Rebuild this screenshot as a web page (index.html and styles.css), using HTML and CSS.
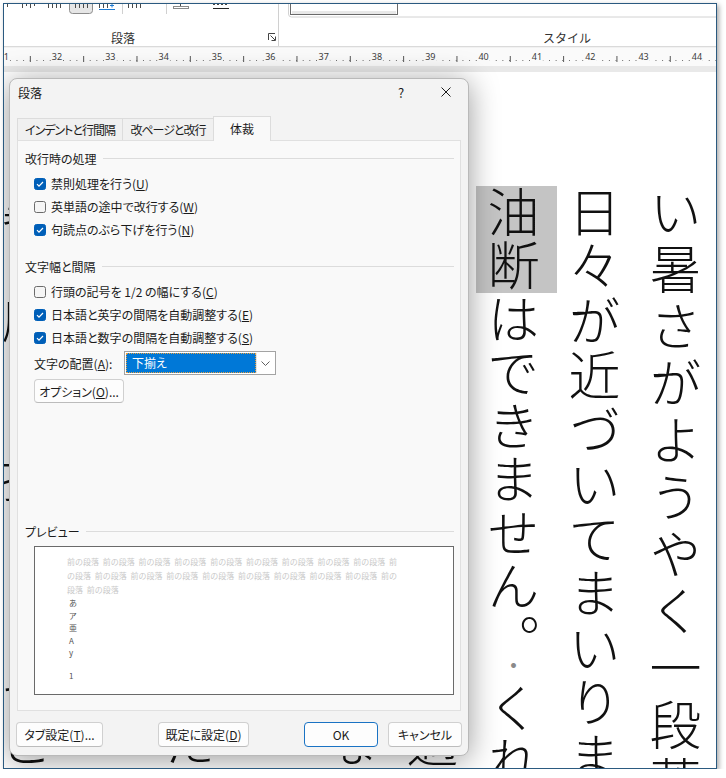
FILE: index.html
```html
<!DOCTYPE html>
<html lang="ja">
  <head>
    <meta charset="utf-8" />
    <title>段落</title>
    <link rel="stylesheet" href="styles.css">
  </head>
  <body>
    <div class="window">
      <header class="ribbon">
        <svg class="ribbon-icons" width="712" height="20" viewBox="4 4 712 20">
          <g stroke="#4a4a4a" fill="none">
            <path d="M7.5 4v3M22.5 4v4M26.5 4v2M30.5 4v4M34.5 4v2M48.5 4v4M52.5 4v4M56.5 4v4M60.5 4v4"/>
            <rect x="69.5" y="0.5" width="23" height="13" rx="3" fill="#e6e6e6" stroke="#8c8c8c"/>
            <path d="M75.5 4v4M79.5 4v4M83.5 4v4M87.5 4v4M99.5 4v4M103.5 4v4M107.5 4v4"/>
            <path d="M128.5 4v4M132.5 4v4M136.5 4v4M140.5 4v4M180.5 4v2"/>
          </g>
          <path d="M99 9.5h16M110 5.5h4M112 3.5v4" stroke="#1e7bd3"/>
          <path d="M122.5 4v10M166.5 4v10M278.5 4v20" stroke="#d0d0d0"/>
          <rect x="173.5" y="6.5" width="15" height="2" fill="none" stroke="#8a8a8a"/>
          <path d="M213 4.5h16" stroke="#444" stroke-dasharray="2 2"/>
          <path d="M213 8.5h16" stroke="#222"/>
          <path d="M288.5 4v10a3 3 0 0 0 3 3H716" fill="none" stroke="#d2d2d2"/>
          <rect x="290.5" y="2.5" width="107" height="12" fill="#fff" stroke="#6a6a6a"/>
          <rect x="292" y="11" width="104" height="3" fill="#e8e8e8"/>
        </svg>
        <div class="ribbon-labels">
          <div class="group group-para">
            <span class="label">段落</span>
            <svg class="launcher" width="8" height="8" viewBox="0 0 8 8"><path d="M0.5 7V0.5H7M2.5 2.5l4.5 4.5M7.5 3.5v4h-4" fill="none" stroke="#444"/></svg>
          </div>
          <div class="group group-style">
            <span class="label">スタイル</span>
          </div>
        </div>
      </header>

      <div class="ruler-bar">
        <div class="ruler">
          <div class="ruler-num"><span>31</span></div>
          <div class="ruler-num"><span>32</span></div>
          <div class="ruler-num"><span>33</span></div>
          <div class="ruler-num"><span>34</span></div>
          <div class="ruler-num"><span>35</span></div>
          <div class="ruler-num"><span>36</span></div>
          <div class="ruler-num"><span>37</span></div>
          <div class="ruler-num"><span>38</span></div>
          <div class="ruler-num"><span>39</span></div>
          <div class="ruler-num"><span>40</span></div>
          <div class="ruler-num"><span>41</span></div>
          <div class="ruler-num"><span>42</span></div>
          <div class="ruler-num"><span>43</span></div>
          <div class="ruler-num"><span>44</span></div>
          <div class="ruler-num"><span>45</span></div>
        </div>
        <div class="ruler-band"></div>
      </div>

      <main class="doc">
        <div class="page">
          <p class="c1">い暑さがようやく一段落し、</p>
          <p class="c2">日々が近づいてまいりました。</p>
          <p class="c3"><span class="sel">油断</span>はできません。<span class="sp">・</span>くれぐれも</p>
          <p>お体にお気をつけてお過ごしください。</p>
          <p>さて、このたびは結構なお品を</p>
          <p>お送りいただきまして、誠に</p>
          <p>ありがとうございました。家族</p>
          <p>まずは御礼まで。</p>
          <p>暑さ厳しき折、どうぞご自愛ください。</p>
        </div>
      </main>

      <div class="dialog">
        <div class="dlg-title">
          <span>段落</span>
          <span class="dlg-help">?</span>
          <span class="dlg-close">
            <svg width="10" height="10" viewBox="0 0 10 10"><path d="M0.5 0.5l9 9M9.5 0.5l-9 9" stroke="#1b1b1b"/></svg>
          </span>
        </div>

        <div class="tabs">
          <div class="tab tab-indent">インデントと行間隔</div>
          <div class="tab tab-page">改ページと改行</div>
          <div class="tab tab-style active">体裁</div>
        </div>

        <div class="panel">
          <div class="group-head">改行時の処理</div>
          <label class="check on first">
            <span class="box"><svg width="10" height="10" viewBox="0 0 10 10"><path d="M2 5.2l2 2 4-4.2" fill="none" stroke="#fff" stroke-width="1.2"/></svg></span>
            禁則処理を行う(<u>U</u>)
          </label>
          <label class="check">
            <span class="box"></span>
            英単語の途中で改行する(<u>W</u>)
          </label>
          <label class="check on">
            <span class="box"><svg width="10" height="10" viewBox="0 0 10 10"><path d="M2 5.2l2 2 4-4.2" fill="none" stroke="#fff" stroke-width="1.2"/></svg></span>
            句読点のぶら下げを行う(<u>N</u>)
          </label>

          <div class="group-head second">文字幅と間隔</div>
          <label class="check first">
            <span class="box"></span>
            行頭の記号を 1/2 の幅にする(<u>C</u>)
          </label>
          <label class="check on">
            <span class="box"><svg width="10" height="10" viewBox="0 0 10 10"><path d="M2 5.2l2 2 4-4.2" fill="none" stroke="#fff" stroke-width="1.2"/></svg></span>
            日本語と英字の間隔を自動調整する(<u>E</u>)
          </label>
          <label class="check on">
            <span class="box"><svg width="10" height="10" viewBox="0 0 10 10"><path d="M2 5.2l2 2 4-4.2" fill="none" stroke="#fff" stroke-width="1.2"/></svg></span>
            日本語と数字の間隔を自動調整する(<u>S</u>)
          </label>

          <div class="select-row">
            <span class="select-label">文字の配置(<u>A</u>):</span>
            <div class="select">
              <span class="select-value">下揃え</span>
              <span class="select-arrow">
                <svg width="9" height="5" viewBox="0 0 9 5"><path d="M0.5 0.5l4 4 4-4" fill="none" stroke="#606060"/></svg>
              </span>
            </div>
          </div>
          <div class="btn opt-btn">オプション(<u>O</u>)...</div>

          <div class="preview">
            <div class="group-head">プレビュー</div>
            <div class="preview-box">
              <p class="prev-text">前の段落 前の段落 前の段落 前の段落 前の段落 前の段落 前の段落 前の段落 前の段落 前の段落 前の段落 前の段落 前の段落 前の段落 前の段落 前の段落 前の段落 前の段落 前の段落 前の段落</p>
              <div class="prev-chars">
                <span>あ</span>
                <span>ア</span>
                <span>亜</span>
                <span>A</span>
                <span>y</span>
                <span class="one">1</span>
              </div>
            </div>
          </div>
        </div>

        <div class="dlg-buttons">
          <div class="btn btn-tab">タブ設定(<u>T</u>)...</div>
          <div class="btn btn-default">既定に設定(<u>D</u>)</div>
          <div class="btn btn-ok">OK</div>
          <div class="btn btn-cancel">キャンセル</div>
        </div>
      </div>
    </div>
  </body>
</html>
```

FILE: styles.css
```css
/* Reset */
* {
  margin: 0;
  padding: 0;
  box-sizing: border-box;
}

body {
  background: #fff;
  font-family: "Noto Sans CJK JP", "Noto Sans", sans-serif;
  font-size: 12px;
  color: #1b1b1b;
  overflow: hidden;
}

/* Word window */
.window {
  position: relative;
  width: 714px;
  height: 766px;
  margin: 3px 0 0 3px;
  border: 1px solid #2b5a80;
  box-shadow: 2px 2px 5px rgba(0, 0, 0, 0.35);
  display: flex;
  flex-direction: column;
  overflow: hidden;
  background: #fff;
}

/* Ribbon */
.ribbon {
  flex: none;
  height: 42px;
  background: #fff;
}

.ribbon-icons {
  display: block;
}

.ribbon-labels {
  display: flex;
  height: 22px;
}

.group {
  display: flex;
  align-items: center;
  padding-top: 4px;
  color: #333;
}

.group-para {
  width: 275px;
  border-right: 1px solid #d0d0d0;
}

.group-para .label {
  margin-left: 107px;
}

.launcher {
  margin-left: auto;
  margin-right: 2px;
}

.group-style .label {
  margin-left: 264px;
}

/* Ruler */
.ruler-bar {
  flex: none;
  border-top: 1px solid #dadada;
  padding-top: 1px;
  background: #f1f1f1;
}

.ruler {
  display: flex;
  height: 18px;
  overflow: hidden;
  font-family: "Noto Sans", sans-serif;
  font-size: 9px;
  line-height: 18px;
  color: #3c3c3c;
  background-color: #fafafa;
  background-image:
    linear-gradient(to right, #6a6a6a 1px, transparent 1px),
    linear-gradient(to right, #555 1px, transparent 1px);
  background-size: 6.6667px 1px, 53.3333px 6px;
  background-position: 5.83px 12px, 25.83px 8px;
  background-repeat: repeat-x;
}

.ruler-num {
  flex: 0 0 53.3333px;
}

.ruler-num:first-child {
  margin-left: -0.333px;
}

.ruler-num span {
  display: inline-block;
  transform: translateX(-50%);
  background: #fafafa;
  padding: 0 1px;
}

.ruler-band {
  height: 6px;
  background: #e9e9e9;
}

/* Document page */
.doc {
  flex: 1;
  position: relative;
  overflow: hidden;
  background: #fff;
}

.page {
  writing-mode: vertical-rl;
  width: 100%;
  height: 100%;
  padding-top: 114px;
  font-size: 52px;
  line-height: 81px;
  font-weight: 300;
  color: #111;
}

.page p {
  white-space: nowrap;
  letter-spacing: 1px;
}

.page .c1 {
  letter-spacing: 5px;
}

.page .c2 {
  letter-spacing: 2.5px;
}

.page .c3 {
  letter-spacing: 1.5px;
}

.sel {
  background: #c4c4c4;
  padding-right: 6px;
}

.sp {
  font-size: 26px;
  color: #8a8a8a;
  margin-top: 10px;
  margin-bottom: 3px;
}

/* Paragraph dialog */
.dialog {
  position: absolute;
  left: 5px;
  top: 74px;
  width: 460px;
  height: 678px;
  display: flex;
  flex-direction: column;
  background: #f3f3f3;
  border: 1px solid #b9b9b9;
  border-radius: 8px;
  box-shadow: 0 4px 30px rgba(0, 0, 0, 0.4);
  font-feature-settings: "palt";
}

.dlg-title {
  display: flex;
  align-items: center;
  height: 26px;
  padding-left: 8px;
}

.dlg-help {
  margin-left: auto;
  width: 30px;
  text-align: center;
  font-size: 13px;
}

.dlg-close {
  display: flex;
  justify-content: center;
  width: 30px;
  margin: 0 7px 0 15px;
}

/* Tabs */
.tabs {
  display: flex;
  align-items: flex-end;
  height: 24px;
  margin: 11px 7px 0;
}

.tab {
  height: 22px;
  line-height: 21px;
  text-align: center;
  letter-spacing: -1px;
  border: 1px solid #dcdcdc;
  border-bottom: none;
  margin-left: -1px;
  background: #f0f0f0;
}

.tab-indent {
  width: 106px;
  margin-left: 0;
}

.tab-page {
  width: 92px;
}

.tab-style {
  width: 58px;
}

.tab.active {
  position: relative;
  z-index: 1;
  height: 25px;
  margin-bottom: -1px;
  line-height: 23px;
  letter-spacing: 0;
  background: #f9f9f9;
}

/* Tab panel */
.panel {
  display: flex;
  flex-direction: column;
  height: 571px;
  margin: 0 7px;
  padding: 9px 6px 15px 7px;
  border: 1px solid #e0e0e0;
  background: #f9f9f9;
}

.group-head {
  display: flex;
  align-items: center;
  height: 16px;
}

.group-head::after {
  content: "";
  flex: 1;
  height: 1px;
  margin-left: 6px;
  background: #dcdcdc;
}

.group-head.second {
  margin-top: 17px;
}

.check {
  display: flex;
  align-items: center;
  height: 23px;
  padding-left: 9px;
}

.check.first {
  margin-top: 6px;
}

.box {
  flex: none;
  width: 12px;
  height: 12px;
  margin-right: 5px;
  border: 1px solid #6b6b6b;
  border-radius: 2.5px;
  background: #f5f5f5;
}

.box svg {
  display: block;
}

.check.on .box {
  background: #005fb8;
  border-color: #005fb8;
}

/* Alignment select */
.select-row {
  display: flex;
  align-items: center;
  height: 24px;
  margin-top: 2px;
  padding-left: 9px;
}

.select-label {
  width: 90px;
}

.select {
  display: flex;
  width: 152px;
  height: 24px;
  padding: 1px;
  border: 1px solid #a3a3a3;
  background: #fff;
}

.select-value {
  flex: 1;
  padding-left: 6px;
  line-height: 20px;
  color: #fff;
  background: #0078d7;
  outline: 1px dotted #e8a040;
  outline-offset: -1px;
}

.select-arrow {
  display: flex;
  align-items: center;
  justify-content: center;
  width: 18px;
  border-left: 1px solid #e6e6e6;
}

/* Buttons */
.btn {
  display: flex;
  align-items: center;
  justify-content: center;
  height: 25px;
  border: 1px solid #d0d0d0;
  border-bottom-color: #bcbcbc;
  border-radius: 4px;
  background: #fdfdfd;
}

.opt-btn {
  width: 90px;
  height: 24px;
  margin: 4px 0 0 9px;
}

/* Preview */
.preview {
  margin-top: auto;
}

.preview-box {
  height: 149px;
  margin: 7px 0 0 9px;
  padding: 8px 0 0 32px;
  border: 1px solid #6a6a6a;
  background: #fff;
}

.prev-text {
  width: 334px;
  font-size: 8px;
  line-height: 14px;
  word-spacing: 2px;
  color: #c9c9c9;
  font-feature-settings: normal;
}

.prev-chars {
  display: flex;
  flex-direction: column;
  padding-left: 2px;
  font-size: 8px;
  line-height: 12.5px;
  color: #555;
}

.prev-chars .one {
  margin-top: 10px;
}

/* Dialog buttons */
.dlg-buttons {
  display: flex;
  margin: 11px 6px 0;
}

.btn-tab {
  width: 87px;
}

.btn-default {
  width: 91px;
  margin-left: 55px;
}

.btn-ok {
  width: 74px;
  margin-left: auto;
  border-color: #1a73c4;
}

.btn-cancel {
  width: 74px;
  margin-left: 10px;
}
```
